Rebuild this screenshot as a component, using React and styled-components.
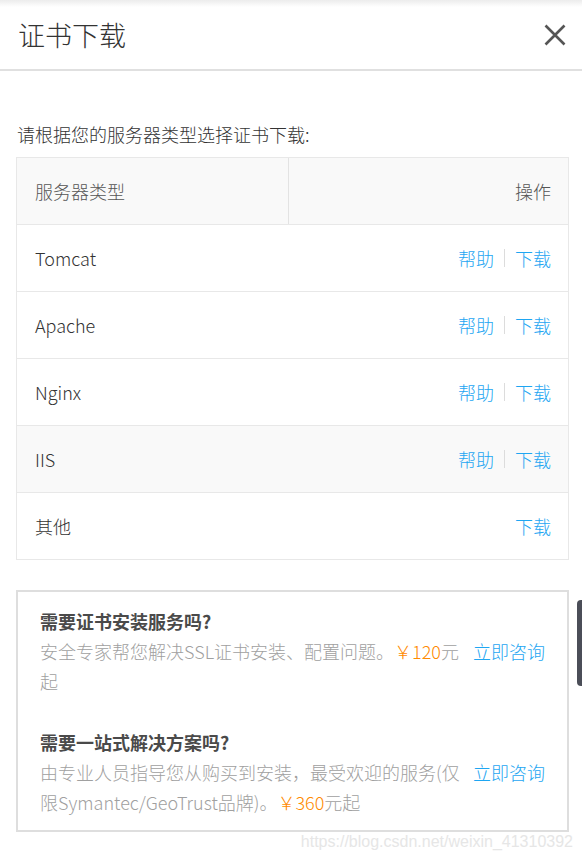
import React from "react";
import styled, { createGlobalStyle } from "styled-components";

const Global = createGlobalStyle`
  html, body { margin: 0; padding: 0; background: #fff; }
  body {
    font-family: "Noto Sans CJK SC", "Noto Sans", sans-serif;
    font-weight: 300;
    -webkit-font-smoothing: antialiased;
  }
`;

const Page = styled.div`
  position: relative;
  width: 582px;
  height: 862px;
  overflow: hidden;
  background: #fff;
`;

const TopShade = styled.div`
  position: absolute;
  left: 0;
  right: 0;
  top: 0;
  height: 7px;
  background: linear-gradient(#ececec, rgba(255, 255, 255, 0));
`;

const Header = styled.div`
  display: flex;
  align-items: center;
  justify-content: space-between;
  height: 69px;
  padding: 0 12px 0 18px;
  border-bottom: 2px solid #e0e0e0;
`;

const Title = styled.h1`
  margin: 0;
  font-size: 27px;
  font-weight: 300;
  color: #333;
  line-height: 36px;
`;

const Close = styled.button`
  border: 0;
  background: none;
  padding: 0;
  width: 30px;
  height: 30px;
  display: flex;
  align-items: center;
  justify-content: center;
  cursor: pointer;
`;

const Body = styled.div`
  padding: 48px 13px 0 16px;
`;

const Intro = styled.p`
  margin: 0 0 8px 1px;
  font-size: 18px;
  line-height: 30px;
  color: #333;
`;

const Table = styled.div`
  border: 1px solid #e8e8e8;
  border-bottom: 0;
`;

const Row = styled.div`
  display: grid;
  grid-template-columns: 272px 1fr;
  height: 66px;
  border-bottom: 1px solid #e8e8e8;
  background: ${(p) => (p.$shaded ? "#f9f9f9" : "#fff")};
`;

const Cell = styled.div`
  display: flex;
  align-items: center;
  justify-content: ${(p) => (p.$right ? "flex-end" : "flex-start")};
  padding: ${(p) => (p.$right ? "0 17px 0 0" : "0 0 0 18px")};
  font-size: 18px;
  color: ${(p) => (p.$head ? "#555" : "#333")};
  border-right: ${(p) => (p.$divider ? "1px solid #e3e3e3" : "0")};
`;

const Link = styled.a`
  color: #1ea6f2;
  text-decoration: none;
  font-size: 18px;
  cursor: pointer;
`;

const Sep = styled.span`
  display: inline-block;
  width: 1px;
  height: 18px;
  background: #dcdcdc;
  margin: 0 10px;
`;

const ServiceBox = styled.div`
  margin-top: 30px;
  border: 2px solid #dedede;
  padding: 14px 22px 13px 22px;
  display: flex;
  flex-direction: column;
  gap: 31px;
`;

const Section = styled.div`
  display: flex;
  flex-direction: column;
`;

const SectionTitle = styled.div`
  font-size: 18px;
  line-height: 30px;
  font-weight: 700;
  color: #4a4a4a;
`;

const DescRow = styled.div`
  display: flex;
  align-items: flex-start;
`;

const Desc = styled.div`
  flex: 1;
  font-size: 18px;
  line-height: 30px;
  color: #a0a0a0;
`;

const Price = styled.span`
  color: #ff8a00;
`;

const Consult = styled.a`
  margin-left: 8px;
  color: #1ea6f2;
  font-size: 18px;
  line-height: 30px;
  white-space: nowrap;
  cursor: pointer;
`;

const Watermark = styled.div`
  position: absolute;
  right: 9px;
  top: 833px;
  font-family: "Liberation Sans", Arial, sans-serif;
  font-weight: 400;
  font-size: 16px;
  color: #e6e6e6;
  text-shadow: 0 0 1px #fff;
  white-space: nowrap;
`;

const SideTab = styled.div`
  position: absolute;
  right: -6px;
  top: 600px;
  width: 11px;
  height: 86px;
  border-radius: 4px;
  background: #4b4e58;
`;

const servers = [
  { name: "Tomcat", help: true },
  { name: "Apache", help: true },
  { name: "Nginx", help: true },
  { name: "IIS", help: true, shaded: true },
  { name: "其他", help: false },
];

export default function App() {
  return (
    <Page>
      <Global />
      <TopShade />
      <Header>
        <Title>证书下载</Title>
        <Close aria-label="关闭">
          <svg width="24" height="24" viewBox="0 0 24 24">
            <path
              d="M2.5 2.5 L21.5 21.5 M21.5 2.5 L2.5 21.5"
              stroke="#555"
              strokeWidth="2.6"
              fill="none"
            />
          </svg>
        </Close>
      </Header>
      <Body>
        <Intro>请根据您的服务器类型选择证书下载:</Intro>
        <Table>
          <Row $shaded>
            <Cell $head $divider>服务器类型</Cell>
            <Cell $head $right>操作</Cell>
          </Row>
          {servers.map((s) => (
            <Row key={s.name} $shaded={s.shaded}>
              <Cell>{s.name}</Cell>
              <Cell $right>
                {s.help && (
                  <>
                    <Link>帮助</Link>
                    <Sep />
                  </>
                )}
                <Link>下载</Link>
              </Cell>
            </Row>
          ))}
        </Table>
        <ServiceBox>
          <Section>
            <SectionTitle>需要证书安装服务吗?</SectionTitle>
            <DescRow>
              <Desc>
                安全专家帮您解决SSL证书安装、配置问题。<Price>￥120</Price>元起
              </Desc>
              <Consult>立即咨询</Consult>
            </DescRow>
          </Section>
          <Section>
            <SectionTitle>需要一站式解决方案吗?</SectionTitle>
            <DescRow>
              <Desc>
                由专业人员指导您从购买到安装，最受欢迎的服务(仅限Symantec/GeoTrust品牌)。<Price>￥360</Price>元起
              </Desc>
              <Consult>立即咨询</Consult>
            </DescRow>
          </Section>
        </ServiceBox>
      </Body>
      <Watermark>https://blog.csdn.net/weixin_41310392</Watermark>
      <SideTab />
    </Page>
  );
}
